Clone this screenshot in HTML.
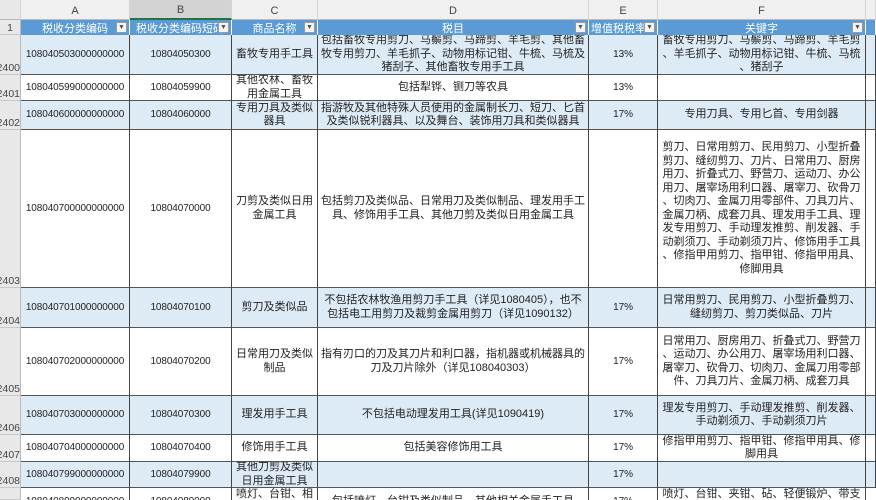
<!DOCTYPE html>
<html><head><meta charset="utf-8"><style>
*{margin:0;padding:0;box-sizing:border-box}
html,body{width:876px;height:500px;overflow:hidden}
body{background:#fff;font-family:"Liberation Sans","Noto Sans CJK SC",sans-serif;font-size:11px;color:#222;position:relative}
.c{position:absolute;display:flex;align-items:center;justify-content:center;text-align:center;line-height:13.5px;overflow:hidden;border-right:1px solid #444;border-bottom:1.5px solid #555;white-space:nowrap}
.n{font-size:10px;letter-spacing:-0.1px}
.h{position:absolute;top:0;height:20px;background:#f0f0f0;border-right:1px solid #d4d4d4;border-bottom:1px solid #bbb;color:#444;font-size:11px;display:flex;align-items:flex-end;justify-content:center;padding-bottom:2px}
.rn{position:absolute;left:0;width:21px;background:#e8e8e8;border-bottom:1px solid #c8c8c8;border-right:1px solid #bbb;color:#444;font-size:10.5px;display:flex;align-items:flex-end;justify-content:flex-end;overflow:hidden;white-space:nowrap}
.hd{position:absolute;top:20px;height:15px;background:#5b9bd5;color:#fff;display:flex;align-items:center;justify-content:center;border-right:1px solid #fff;font-size:11px;white-space:nowrap;overflow:hidden}
.dd{position:absolute;right:2px;top:2px;width:11px;height:11px;background:#f4f4f4;border:1px solid #999;color:#555;font-size:7px;line-height:9px;text-align:center}
.b{background:#ddebf7}
</style></head><body>
<div class="h" style="left:0;width:21px;background:#e8e8e8"></div>
<div class="h" style="left:21px;width:109px">A</div>
<div class="h" style="left:130px;width:102px;background:#d3d3d3;border-bottom:2px solid #217346">B</div>
<div class="h" style="left:232px;width:86px">C</div>
<div class="h" style="left:318px;width:271px">D</div>
<div class="h" style="left:589px;width:69px">E</div>
<div class="h" style="left:658px;width:208px">F</div>
<div class="h" style="left:866px;width:10px"></div>

<div class="rn" style="top:20px;height:15px;justify-content:center">1</div>
<div class="hd" style="left:21px;width:109px">税收分类编码<span class="dd">▼</span></div>
<div class="hd" style="left:130px;width:102px;justify-content:flex-start;padding-left:6px">税收分类编码短码<span class="dd">▼</span></div>
<div class="hd" style="left:232px;width:86px">商品名称<span class="dd">▼</span></div>
<div class="hd" style="left:318px;width:271px">税目<span class="dd">▼</span></div>
<div class="hd" style="left:589px;width:69px;justify-content:flex-start;padding-left:2px">增值税税率<span class="dd">▼</span></div>
<div class="hd" style="left:658px;width:208px">关键字<span class="dd">▼</span></div>
<div class="hd" style="left:866px;width:10px"></div>

<!-- 2400 -->
<div class="rn" style="top:35px;height:40px">2400</div>
<div class="c b n" style="left:21px;top:35px;width:109px;height:40px">108040503000000000</div>
<div class="c b n" style="left:130px;top:35px;width:102px;height:40px">10804050300</div>
<div class="c b" style="left:232px;top:35px;width:86px;height:40px">畜牧专用手工具</div>
<div class="c b" style="left:318px;top:35px;width:271px;height:40px">包括畜牧专用剪刀、马鬃剪、马蹄剪、羊毛剪、其他畜<br>牧专用剪刀、羊毛抓子、动物用标记钳、牛梳、马梳及<br>猪刮子、其他畜牧专用手工具</div>
<div class="c b n" style="left:589px;top:35px;width:69px;height:40px">13%</div>
<div class="c b" style="left:658px;top:35px;width:208px;height:40px">畜牧专用剪刀、马鬃剪、马蹄剪、羊毛剪<br>、羊毛抓子、动物用标记钳、牛梳、马梳<br>、猪刮子</div>
<div class="c b" style="left:866px;top:35px;width:10px;height:40px"></div>

<!-- 2401 -->
<div class="rn" style="top:75px;height:26px">2401</div>
<div class="c n" style="left:21px;top:75px;width:109px;height:26px">108040599000000000</div>
<div class="c n" style="left:130px;top:75px;width:102px;height:26px">10804059900</div>
<div class="c" style="left:232px;top:75px;width:86px;height:26px">其他农林、畜牧<br>用金属工具</div>
<div class="c" style="left:318px;top:75px;width:271px;height:26px">包括犁铧、铡刀等农具</div>
<div class="c n" style="left:589px;top:75px;width:69px;height:26px">13%</div>
<div class="c" style="left:658px;top:75px;width:208px;height:26px"></div>
<div class="c" style="left:866px;top:75px;width:10px;height:26px"></div>

<!-- 2402 -->
<div class="rn" style="top:101px;height:29px">2402</div>
<div class="c b n" style="left:21px;top:101px;width:109px;height:29px">108040600000000000</div>
<div class="c b n" style="left:130px;top:101px;width:102px;height:29px">10804060000</div>
<div class="c b" style="left:232px;top:101px;width:86px;height:29px">专用刀具及类似<br>器具</div>
<div class="c b" style="left:318px;top:101px;width:271px;height:29px">指游牧及其他特殊人员使用的金属制长刀、短刀、匕首<br>及类似锐利器具、以及舞台、装饰用刀具和类似器具</div>
<div class="c b n" style="left:589px;top:101px;width:69px;height:29px">17%</div>
<div class="c b" style="left:658px;top:101px;width:208px;height:29px">专用刀具、专用匕首、专用剑器</div>
<div class="c b" style="left:866px;top:101px;width:10px;height:29px"></div>

<!-- 2403 -->
<div class="rn" style="top:130px;height:158px">2403</div>
<div class="c n" style="left:21px;top:130px;width:109px;height:158px">108040700000000000</div>
<div class="c n" style="left:130px;top:130px;width:102px;height:158px">10804070000</div>
<div class="c" style="left:232px;top:130px;width:86px;height:158px">刀剪及类似日用<br>金属工具</div>
<div class="c" style="left:318px;top:130px;width:271px;height:158px">包括剪刀及类似品、日常用刀及类似制品、理发用手工<br>具、修饰用手工具、其他刀剪及类似日用金属工具</div>
<div class="c" style="left:589px;top:130px;width:69px;height:158px"></div>
<div class="c" style="left:658px;top:130px;width:208px;height:158px">剪刀、日常用剪刀、民用剪刀、小型折叠<br>剪刀、缝纫剪刀、刀片、日常用刀、厨房<br>用刀、折叠式刀、野营刀、运动刀、办公<br>用刀、屠宰场用利口器、屠宰刀、砍骨刀<br>、切肉刀、金属刀用零部件、刀具刀片、<br>金属刀柄、成套刀具、理发用手工具、理<br>发专用剪刀、手动理发推剪、削发器、手<br>动剃须刀、手动剃须刀片、修饰用手工具<br>、修指甲用剪刀、指甲钳、修指甲用具、<br>修脚用具</div>
<div class="c" style="left:866px;top:130px;width:10px;height:158px"></div>

<!-- 2404 -->
<div class="rn" style="top:288px;height:40px">2404</div>
<div class="c b n" style="left:21px;top:288px;width:109px;height:40px">108040701000000000</div>
<div class="c b n" style="left:130px;top:288px;width:102px;height:40px">10804070100</div>
<div class="c b" style="left:232px;top:288px;width:86px;height:40px">剪刀及类似品</div>
<div class="c b" style="left:318px;top:288px;width:271px;height:40px">不包括农林牧渔用剪刀手工具（详见1080405），也不<br>包括电工用剪刀及裁剪金属用剪刀（详见1090132）</div>
<div class="c b n" style="left:589px;top:288px;width:69px;height:40px">17%</div>
<div class="c b" style="left:658px;top:288px;width:208px;height:40px">日常用剪刀、民用剪刀、小型折叠剪刀、<br>缝纫剪刀、剪刀类似品、刀片</div>
<div class="c b" style="left:866px;top:288px;width:10px;height:40px"></div>

<!-- 2405 -->
<div class="rn" style="top:328px;height:68px">2405</div>
<div class="c n" style="left:21px;top:328px;width:109px;height:68px">108040702000000000</div>
<div class="c n" style="left:130px;top:328px;width:102px;height:68px">10804070200</div>
<div class="c" style="left:232px;top:328px;width:86px;height:68px">日常用刀及类似<br>制品</div>
<div class="c" style="left:318px;top:328px;width:271px;height:68px">指有刃口的刀及其刀片和利口器，指机器或机械器具的<br>刀及刀片除外（详见108040303）</div>
<div class="c n" style="left:589px;top:328px;width:69px;height:68px">17%</div>
<div class="c" style="left:658px;top:328px;width:208px;height:68px">日常用刀、厨房用刀、折叠式刀、野营刀<br>、运动刀、办公用刀、屠宰场用利口器、<br>屠宰刀、砍骨刀、切肉刀、金属刀用零部<br>件、刀具刀片、金属刀柄、成套刀具</div>
<div class="c" style="left:866px;top:328px;width:10px;height:68px"></div>

<!-- 2406 -->
<div class="rn" style="top:396px;height:39px">2406</div>
<div class="c b n" style="left:21px;top:396px;width:109px;height:39px">108040703000000000</div>
<div class="c b n" style="left:130px;top:396px;width:102px;height:39px">10804070300</div>
<div class="c b" style="left:232px;top:396px;width:86px;height:39px">理发用手工具</div>
<div class="c b" style="left:318px;top:396px;width:271px;height:39px">不包括电动理发用工具(详见1090419)</div>
<div class="c b n" style="left:589px;top:396px;width:69px;height:39px">17%</div>
<div class="c b" style="left:658px;top:396px;width:208px;height:39px">理发专用剪刀、手动理发推剪、削发器、<br>手动剃须刀、手动剃须刀片</div>
<div class="c b" style="left:866px;top:396px;width:10px;height:39px"></div>

<!-- 2407 -->
<div class="rn" style="top:435px;height:27px">2407</div>
<div class="c n" style="left:21px;top:435px;width:109px;height:27px">108040704000000000</div>
<div class="c n" style="left:130px;top:435px;width:102px;height:27px">10804070400</div>
<div class="c" style="left:232px;top:435px;width:86px;height:27px">修饰用手工具</div>
<div class="c" style="left:318px;top:435px;width:271px;height:27px">包括美容修饰用工具</div>
<div class="c n" style="left:589px;top:435px;width:69px;height:27px">17%</div>
<div class="c" style="left:658px;top:435px;width:208px;height:27px">修指甲用剪刀、指甲钳、修指甲用具、修<br>脚用具</div>
<div class="c" style="left:866px;top:435px;width:10px;height:27px"></div>

<!-- 2408 -->
<div class="rn" style="top:462px;height:26px">2408</div>
<div class="c b n" style="left:21px;top:462px;width:109px;height:26px">108040799000000000</div>
<div class="c b n" style="left:130px;top:462px;width:102px;height:26px">10804079900</div>
<div class="c b" style="left:232px;top:462px;width:86px;height:26px">其他刀剪及类似<br>日用金属工具</div>
<div class="c b" style="left:318px;top:462px;width:271px;height:26px"></div>
<div class="c b n" style="left:589px;top:462px;width:69px;height:26px">17%</div>
<div class="c b" style="left:658px;top:462px;width:208px;height:26px"></div>
<div class="c b" style="left:866px;top:462px;width:10px;height:26px"></div>

<!-- partial -->
<div class="rn" style="top:488px;height:12px"></div>
<div class="c n" style="left:21px;top:488px;width:109px;height:12px;align-items:flex-start;padding-top:7px;border-bottom:none">108040800000000000</div>
<div class="c n" style="left:130px;top:488px;width:102px;height:12px;align-items:flex-start;padding-top:7px;border-bottom:none">10804080000</div>
<div class="c" style="left:232px;top:488px;width:86px;height:12px;align-items:flex-start;padding-top:0px;border-bottom:none">喷灯、台钳、相</div>
<div class="c" style="left:318px;top:488px;width:271px;height:12px;align-items:flex-start;padding-top:7px;border-bottom:none">包括喷灯、台钳及类似制品、其他相关金属手工具</div>
<div class="c n" style="left:589px;top:488px;width:69px;height:12px;align-items:flex-start;padding-top:7px;border-bottom:none">17%</div>
<div class="c" style="left:658px;top:488px;width:208px;height:12px;align-items:flex-start;padding-top:0px;border-bottom:none">喷灯、台钳、夹钳、砧、轻便锻炉、带支</div>
</body></html>
